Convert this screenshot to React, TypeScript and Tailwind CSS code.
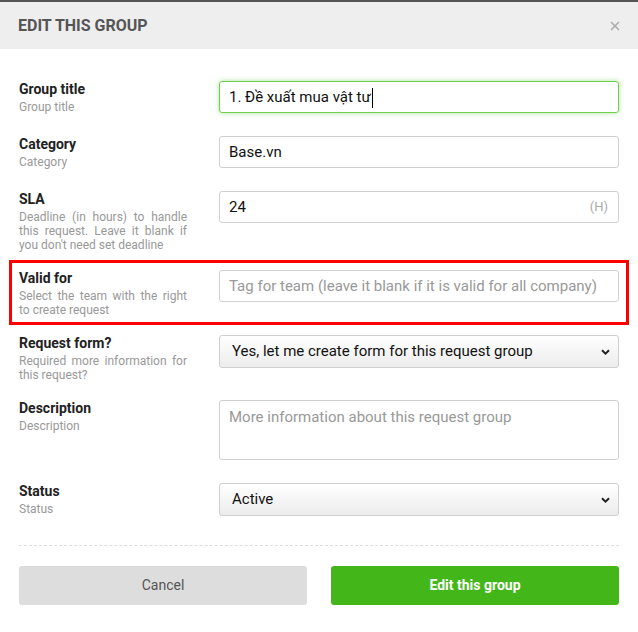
import React from "react";

function Label({ label, hint, justify }: { label: string; hint: string; justify?: boolean }) {
  return (
    <div className="w-[168px] shrink-0">
      <div className="text-[14px] leading-[17px] font-bold text-[#222]">{label}</div>
      <div
        className={`mt-[2px] text-[12px] leading-[14px] text-[#999] ${justify ? "text-justify" : ""}`}
      >
        {hint}
      </div>
    </div>
  );
}

function Chevron() {
  return (
    <svg width="9" height="6" viewBox="0 0 9 6" className="absolute right-[8px] top-1/2 -translate-y-1/2">
      <path d="M1 1.2 L4.5 4.6 L8 1.2" fill="none" stroke="#222" strokeWidth="2" />
    </svg>
  );
}

function Select({ value }: { value: string }) {
  return (
    <div className="relative w-[400px] h-[33px] rounded-[3px] border border-[#cfcfcf] bg-gradient-to-b from-white to-[#ececec] flex items-center pl-[12px] text-[15px] text-[#111]">
      {value}
      <Chevron />
    </div>
  );
}

export default function App() {
  return (
    <div className="w-[638px] h-[632px] bg-white font-['Roboto',sans-serif] overflow-hidden">
      {/* header */}
      <div className="h-[49px] bg-[#eeeeee] border-t-2 border-[#555] flex items-center justify-between pl-[18px] pr-[18px]">
        <h2 className="text-[16px] font-bold text-[#555] uppercase">Edit this group</h2>
        <svg width="10" height="10" viewBox="0 0 10 10">
          <path d="M1 1 L9 9 M9 1 L1 9" stroke="#aaa" strokeWidth="1.5" />
        </svg>
      </div>

      <div className="px-[19px] pt-[32px]">
        {/* group title */}
        <div className="flex gap-[32px] mb-[22px]">
          <Label label="Group title" hint="Group title" />
          <div className="w-[400px] h-[32px] rounded-[3px] border border-[#6fd04f] shadow-[0_0_5px_rgba(102,204,68,0.55)] flex items-center pl-[9px] text-[15px] text-[#111]">
            1. Đề xuất mua vật tư
            <span className="inline-block w-px h-[20px] mt-[2px] bg-black ml-[1px]" />
          </div>
        </div>

        {/* category */}
        <div className="flex gap-[32px] mb-[22px]">
          <Label label="Category" hint="Category" />
          <div className="w-[400px] h-[32px] rounded-[3px] border border-[#d0d0d0] flex items-center pl-[9px] text-[15px] text-[#111]">
            Base.vn
          </div>
        </div>

        {/* SLA */}
        <div className="flex gap-[32px] mb-[18px]">
          <Label
            label="SLA"
            hint="Deadline (in hours) to handle this request. Leave it blank if you don't need set deadline"
            justify
          />
          <div className="w-[400px] h-[32px] rounded-[3px] border border-[#d0d0d0] flex items-center justify-between pl-[9px] pr-[10px] text-[15px] text-[#111]">
            <span>24</span>
            <span className="text-[13px] text-[#aaa]">(H)</span>
          </div>
        </div>

        {/* valid for, highlighted */}
        <div className="relative flex gap-[32px] mb-[18px]">
          <div className="absolute -top-[10px] -left-[10px] -right-[10px] -bottom-[8px] border-[3px] border-[#ff0000] pointer-events-none" />
          <Label label="Valid for" hint="Select the team with the right to create request" justify />
          <div className="w-[400px] h-[32px] rounded-[3px] border border-[#d0d0d0] flex items-center pl-[9px] text-[15px] text-[#999]">
            Tag for team (leave it blank if it is valid for all company)
          </div>
        </div>

        {/* request form */}
        <div className="flex gap-[32px] mb-[18px]">
          <Label label="Request form?" hint="Required more information for this request?" justify />
          <Select value="Yes, let me create form for this request group" />
        </div>

        {/* description */}
        <div className="flex gap-[32px] mb-[23px]">
          <Label label="Description" hint="Description" />
          <div className="w-[400px] h-[60px] rounded-[3px] border border-[#d0d0d0] pl-[9px] pt-[6px] text-[15px] leading-[20px] text-[#999]">
            More information about this request group
          </div>
        </div>

        {/* status */}
        <div className="flex gap-[32px]">
          <Label label="Status" hint="Status" />
          <Select value="Active" />
        </div>

        <div className="mt-[29px] border-t border-dashed border-[#dddddd]" />

        <div className="mt-[20px] flex gap-[24px]">
          <button className="w-[288px] h-[39px] rounded-[3px] bg-[#dddddd] text-[14px] text-[#555]">
            Cancel
          </button>
          <button className="w-[288px] h-[39px] rounded-[3px] bg-[#43b619] text-[14px] font-bold text-white">
            Edit this group
          </button>
        </div>
      </div>
    </div>
  );
}
